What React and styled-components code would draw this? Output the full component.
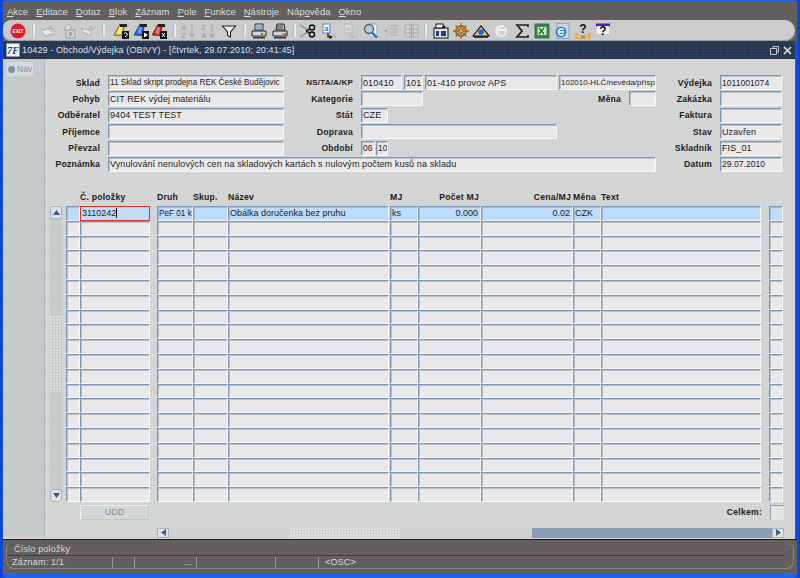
import React from "react";
import styled, { createGlobalStyle } from "styled-components";

const GlobalStyle = createGlobalStyle`
  html, body { margin: 0; padding: 0; background: #1457d8; }
  * { box-sizing: border-box; }
`;

const dots = (color, size = 3) => `
  background-image: radial-gradient(circle at 1px 1px, ${color} 0.5px, transparent 1px);
  background-size: ${size}px ${size}px;
`;

const Frame = styled.div`
  width: 800px;
  height: 578px;
  overflow: hidden;
  display: flex;
  flex-direction: column;
  padding: 2px 3px 4px 3px;
  background: linear-gradient(90deg, #0a3fd0, #1c66ee 1%, #1c66ee 99%, #0a3fd0);
  font-family: "Liberation Sans", Arial, sans-serif;
  font-size: 9px;
  color: #222;
`;

const Menu = styled.div`
  height: 18px;
  flex: none;
  display: flex;
  align-items: center;
  gap: 8px;
  padding-left: 4px;
  font-size: 9.5px;
  color: #dcdcdc;
  background-color: #5f5f5f;
  ${dots("#77605f", 4)}
`;

const MenuKey = styled.u`
  text-decoration: underline;
`;

const Toolbar = styled.div`
  height: 21px;
  flex: none;
  display: flex;
  align-items: center;
  padding-left: 5px;
  margin-right: 2px;
  background: #c9cccb;
  border-radius: 8px 10px 10px 8px;
  box-shadow: inset 0 -1px 0 #9a9fa3;
  position: relative;
`;

const ToolbarBack = styled.div`
  background: #5f5f5f;
  flex: none;
`;

const Slot = styled.div`
  width: ${(p) => p.$w}px;
  flex: none;
  height: 16px;
  display: flex;
  justify-content: center;
`;

const Sep = styled.div`
  width: ${(p) => p.$w}px;
  flex: none;
  height: 13px;
  display: flex;
  justify-content: center;
  &::after {
    content: "";
    width: 2px;
    height: 100%;
    background: #e4e8ec;
    border-left: 1px solid #aebdcc;
  }
`;

const Icon = styled.svg.attrs({ viewBox: "0 0 16 16", width: 16, height: 16 })`
  flex: none;
  overflow: visible;
`;

const TitleBar = styled.div`
  height: 18px;
  flex: none;
  margin-right: 2px;
  display: flex;
  align-items: center;
  padding: 0 3px 0 3px;
  gap: 2px;
  background-color: #283549;
  ${dots("#2f4470", 3)}
  color: #dde1e8;
  font-size: 9px;
  letter-spacing: 0.12px;
`;

const TitleText = styled.span`
  flex: 1;
  white-space: nowrap;
`;

const WinButtons = styled.div`
  display: flex;
  gap: 4px;
  align-items: center;
`;

const Body = styled.div`
  flex: 1;
  min-height: 0;
  margin-right: 2px;
  display: flex;
  background-color: #d6d7d7;
  ${dots("#cdd0d0", 3)}
`;

const NavPanel = styled.div`
  width: 41px;
  flex: none;
  padding: 3px 0 0 3px;
  margin: 0 0 2px 1px;
  background-color: #c9cccc;
  ${dots("#bfc5c6", 3)}
  border-right: 1px solid #a9b6c2;
`;

const NavTab = styled.div`
  width: 26px;
  height: 14px;
  display: flex;
  align-items: center;
  gap: 2px;
  padding-left: 1px;
  background: #d6d9da;
  color: #7f93ad;
  font-size: 8.5px;
`;

const NavDot = styled.span`
  width: 7px;
  height: 7px;
  border-radius: 50%;
  background: #8593a5;
`;

const Main = styled.div`
  flex: 1;
  min-width: 0;
  display: flex;
  flex-direction: column;
  padding-top: 16px;
`;

const Form = styled.div`
  display: flex;
  flex-direction: column;
  gap: 1.4px;
  padding-left: 7px;
`;

const FormRow = styled.div`
  height: 15px;
  display: flex;
  align-items: stretch;
`;

const Label = styled.div`
  width: ${(p) => p.$w}px;
  flex: none;
  margin-right: 8px;
  display: flex;
  align-items: center;
  justify-content: flex-end;
  white-space: nowrap;
  font-size: ${(p) => p.$fs || 8.7}px;
  font-weight: 700;
  letter-spacing: 0.2px;
  color: #1c1c1c;
`;

const Field = styled.div`
  width: ${(p) => p.$w}px;
  margin-right: ${(p) => p.$mr || 0}px;
  flex: none;
  display: flex;
  align-items: center;
  overflow: hidden;
  white-space: nowrap;
  padding: 0 0 0 1px;
  font-size: ${(p) => p.$fs || 9}px;
  letter-spacing: ${(p) => (p.$fs ? 0 : 0.1)}px;
  background: #e9e9e9;
  border-top: 1px solid #7d96b5;
  border-left: 1px solid #7d96b5;
  border-right: 1px solid #f7f7f7;
  border-bottom: 1px solid #f7f7f7;
  box-shadow: inset 1px 1px 0 #b4c2d2;
`;

const TableArea = styled.div`
  margin-top: 18px;
  display: flex;
  padding-left: 5px;
`;

const VScroll = styled.div`
  width: 12px;
  height: 296px;
  margin-top: 16px;
  margin-right: 4px;
  flex: none;
  display: flex;
  flex-direction: column;
  background: #c6cacb;
  border-radius: 3px;
`;

const VButton = styled.div`
  height: 13px;
  flex: none;
  display: flex;
  align-items: center;
  justify-content: center;
  background: #dfe2e4;
  border: 1px solid #a8b4c0;
  border-radius: 3px;
`;

const VTrack = styled.div`
  flex: 1;
  display: flex;
  align-items: center;
`;

const VGrip = styled.div`
  width: 100%;
  height: 76px;
  ${dots("#e9ecec", 3)}
`;

const Table = styled.div`
  display: flex;
  flex-direction: column;
`;

const HeadRow = styled.div`
  height: 16px;
  padding-bottom: 4px;
  display: flex;
  align-items: flex-end;
`;

const HeadCell = styled.div`
  width: ${(p) => p.$w}px;
  margin-left: ${(p) => p.$ml}px;
  padding-right: ${(p) => (p.$align === "right" ? 2 : 0)}px;
  flex: none;
  white-space: nowrap;
  text-align: ${(p) => p.$align};
  font-size: 8.7px;
  font-weight: 700;
  letter-spacing: 0.2px;
  color: #1c1c1c;
`;

const Rows = styled.div`
  display: grid;
  grid-auto-rows: 14.8px;
`;

const Row = styled.div`
  display: flex;
`;

const Cell = styled.div`
  width: ${(p) => p.$w}px;
  margin-left: ${(p) => p.$ml}px;
  flex: none;
  display: flex;
  align-items: center;
  justify-content: ${(p) => (p.$align === "right" ? "flex-end" : "flex-start")};
  overflow: hidden;
  white-space: nowrap;
  padding: 0 ${(p) => (p.$align === "right" ? 2 : 0)}px 0 1px;
  font-size: ${(p) => p.$fs || 9}px;
  background: ${(p) => (p.$active ? "#bfdcfb" : "#e9e9e9")};
  border-top: 1px solid #7d96b5;
  border-left: 1px solid #7d96b5;
  border-right: 1px solid #f7f7f7;
  border-bottom: 1px solid #f7f7f7;
  box-shadow: inset 1px 1px 0 ${(p) => (p.$active ? "#a3bfdc" : "#b4c2d2")};
  ${(p) => p.$focus && "border: 1px solid #d8322e; box-shadow: none;"}
`;

const Caret = styled.span`
  width: 1px;
  height: 10px;
  background: #111;
`;

const Footer = styled.div`
  margin-top: 3px;
  padding-left: 35px;
  display: flex;
  align-items: center;
`;

const UddButton = styled.div`
  width: 69px;
  height: 15px;
  display: flex;
  align-items: center;
  justify-content: center;
  color: #7e8c9c;
  font-size: 9px;
  background: #d4d7d8;
  border: 1px solid #bcc6d0;
  border-top-color: #eef0f0;
  border-left-color: #eef0f0;
`;

const TotalLabel = styled.div`
  margin-left: auto;
  margin-right: 8px;
  font-size: 8.7px;
  font-weight: 700;
  letter-spacing: 0.2px;
`;

const TotalField = styled.div`
  width: 14px;
  height: 15px;
  margin-right: 11px;
  background: #e2e3e3;
  border-top: 1px solid #8ea2bb;
  border-left: 1px solid #8ea2bb;
`;

const HScroll = styled.div`
  height: 10px;
  margin: 8px 11px 0 112px;
  display: flex;
  background: #cfd2d3;
`;

const HButton = styled.div`
  width: 12px;
  flex: none;
  display: flex;
  align-items: center;
  justify-content: center;
  background: #dfe2e4;
  border: 1px solid #a8b4c0;
`;

const HTrack = styled.div`
  flex: 1;
  display: flex;
  padding-left: 121px;
`;

const HGrip = styled.div`
  width: 110px;
  ${dots("#eceeee", 3)}
`;

const HThumb = styled.div`
  width: 240px;
  flex: none;
  background: #8c9db6;
`;

const StatusWrap = styled.div`
  height: 35px;
  flex: none;
  margin-top: auto;
  padding: 2px 3px 5px 3px;
  background-color: #5f5f5f;
  ${dots("#77605f", 4)}
  border-top: 1px solid #1d1d1d;
`;

const StatusBox = styled.div`
  height: 100%;
  display: flex;
  flex-direction: column;
  border: 1px solid #868686;
  border-top: none;
  border-radius: 8px;
  color: #d9d9d9;
  font-size: 9px;
  letter-spacing: 0.2px;
`;

const Hint = styled.div`
  height: 14px;
  padding-left: 7px;
  display: flex;
  align-items: center;
  margin-right: 9px;
  border-bottom: 1px solid #3a4048;
`;

const InfoRow = styled.div`
  flex: 1;
  display: flex;
  align-items: center;
`;

const InfoCell = styled.div`
  width: ${(p) => p.$w}px;
  height: 11px;
  flex: none;
  display: flex;
  align-items: center;
  justify-content: ${(p) => (p.$right ? "flex-end" : "flex-start")};
  padding: 0 ${(p) => (p.$right ? 4 : 0)}px 0 ${(p) => p.$pl || 0}px;
  border-right: 1px solid ${(p) => (p.$plain ? "transparent" : "#8a9bb0")};
`;

const ExitIcon = () => (
  <Icon>
    <circle cx="8" cy="8" r="7.5" fill="#e01c2c" />
    <text x="8" y="10" fontSize="5" fontWeight="700" fill="#fff" textAnchor="middle" fontFamily="Liberation Sans">EXIT</text>
  </Icon>
);

const GreyArrow = ({ flip }) => (
  <Icon>
    <path d={flip ? "M1 5l10 3v5L3 9z" : "M1 8l9-3 4 2v3l-8 3z"} fill="#e3e5e6" stroke="#aab0b4" />
    <path d="M11 3v6M8 6h6" stroke="#b2b8bc" strokeWidth="1.4" />
  </Icon>
);

const GreyFile = () => (
  <Icon>
    <path d="M3 7l4-6 3 2-2 5z" fill="#dfe2e3" stroke="#a5abb0" />
    <rect x="5" y="7" width="9" height="8" fill="#cdd1d3" stroke="#9aa0a5" />
    <path d="M8 9h3v4H8z" fill="#a5abb0" />
  </Icon>
);

const QueryIcon = ({ color, light, mark }) => (
  <Icon>
    <path d="M1 12L7 1l4 3-1 9z" fill={color} stroke="#2b2b2b" strokeWidth="0.6" />
    <path d="M4 10l3-7 2 1-1 7z" fill={light} />
    <rect x="7" y="1" width="7" height="3" fill="#222" />
    <rect x="9" y="8" width="7" height="8" fill="#111" />
    {mark === "help" && <path d="M11 10.5q1.500-1.500 3 0t-1.500 2.500v1" stroke="#fff" fill="none" />}
    {mark === "play" && <path d="M11 9.500l4 2.500-4 2.500z" fill="#fff" />}
    {mark === "x" && <path d="M11 10l3 4M14 10l-3 4" stroke="#fff" />}
  </Icon>
);

const SortIcon = ({ top, bottom }) => (
  <Icon>
    <text x="0" y="7" fontSize="8" fill="#a3a9ae" fontFamily="Liberation Sans" fontWeight="700">{top}</text>
    <text x="0" y="15" fontSize="8" fill="#a3a9ae" fontFamily="Liberation Sans" fontWeight="700">{bottom}</text>
    <path d="M11 1v12M8.500 10.500L11 14l2.500-3.500" stroke="#a3a9ae" fill="none" strokeWidth="1.200" />
  </Icon>
);

const FilterIcon = () => (
  <Icon>
    <path d="M1.500 3h13L9.500 9v5l-3-1.500V9z" fill="#eef0f0" stroke="#222" strokeWidth="1.100" />
  </Icon>
);

const PrintIcon = ({ alt }) => (
  <Icon>
    <path d={alt ? "M5 1h7l1 6H4z" : "M4 1h8v6H4z"} fill={alt ? "#c9c9c9" : "#f3f3f3"} stroke="#222" />
    <path d="M5 3h6M5 5h6" stroke={alt ? "#444" : "#3a6fc0"} />
    <path d="M1 8h14v5H1z" fill="#d5d5d5" stroke="#222" />
    <path d="M2 14h12v1.500H2z" fill="#333" />
    <rect x="10" y="10" width="2" height="2" fill={alt ? "#e0a020" : "#35a040"} />
    <rect x="12.500" y="10" width="2" height="2" fill={alt ? "#d03030" : "#e0c020"} />
  </Icon>
);

const CutIcon = () => (
  <Icon>
    <path d="M0 2l9 6-9 6" fill="none" stroke="#5f9a9c" strokeWidth="1.300" />
    <circle cx="12" cy="4.500" r="2.500" fill="none" stroke="#111" strokeWidth="1.500" />
    <circle cx="12" cy="11.500" r="2.500" fill="none" stroke="#111" strokeWidth="1.500" />
    <path d="M6 8l4-2.500M6 8l4 2.500" stroke="#111" strokeWidth="1.300" />
  </Icon>
);

const CopyIcon = ({ off }) => (
  <Icon>
    <rect x="2" y="1" width="7" height="9" fill={off ? "#dadcdd" : "#eef1f6"} stroke={off ? "#b4b9bc" : "#6c86b8"} />
    <text x="3.500" y="8" fontSize="7" fill={off ? "#aeb3b6" : "#2048c0"} fontFamily="Liberation Sans">a</text>
    <path d="M7 10v4h3M8.500 12.500L10.500 14 8.500 15.500" stroke={off ? "#aeb3b6" : "#111"} fill="none" strokeWidth="1.200" />
    <text x="11" y="15" fontSize="7" fill={off ? "#bbc0c3" : "#a8aeb2"} fontFamily="Liberation Sans">a</text>
  </Icon>
);

const SearchIcon = () => (
  <Icon>
    <path d="M6 1h8v13H8" fill="#e8ebeb" stroke="#a7adb2" />
    <circle cx="6" cy="6" r="4.500" fill="#b9cbd8" stroke="#54606b" strokeWidth="1.300" />
    <path d="M9 9.500l5 5" stroke="#2c6cc8" strokeWidth="2.200" />
  </Icon>
);

const ListIcon = () => (
  <Icon>
    <path d="M6 3h8M6 6h8M6 9h8M6 12h8" stroke="#a5abaf" strokeWidth="1.200" />
    <path d="M4 2v12" stroke="#bcc1c4" />
    <path d="M0 8l3-2v4z" fill="#a5abaf" />
  </Icon>
);

const ColumnsIcon = () => (
  <Icon>
    <path d="M1 2h5v12H1zM9 2h5v12H9z" fill="#d0d3d4" stroke="#a5abaf" />
    <path d="M1 6h5M1 10h5M9 6h5M9 10h5" stroke="#a5abaf" />
    <path d="M7.500 0v16" stroke="#a5abaf" />
  </Icon>
);

const FormIcon = () => (
  <Icon>
    <rect x="1" y="5" width="14" height="10" fill="#dfe6f2" stroke="#111" />
    <path d="M3 8h3v5H3zM8 8h5v5H8z" fill="#1f3f7a" />
    <rect x="3" y="1" width="7" height="4" fill="#fff" stroke="#111" />
    <path d="M9 5l2-3 2 3" fill="#111" />
  </Icon>
);

const WheelIcon = () => (
  <Icon>
    <circle cx="8" cy="8" r="5" fill="none" stroke="#a0651c" strokeWidth="2" />
    <path d="M8 0v16M0 8h16M2.500 2.500l11 11M13.500 2.500l-11 11" stroke="#a0651c" strokeWidth="1.300" />
    <circle cx="8" cy="8" r="1.500" fill="#e0b060" />
  </Icon>
);

const TriangleIcon = () => (
  <Icon>
    <path d="M0 13L8 3l8 10z" fill="#e8d070" stroke="#111" strokeWidth="1.200" />
    <circle cx="8" cy="9" r="2.800" fill="#1c62e0" />
    <path d="M1 14h14" stroke="#111" strokeWidth="1.500" />
  </Icon>
);

const DiscIcon = () => (
  <Icon>
    <circle cx="8" cy="8" r="6.500" fill="#eceeee" stroke="#c4c8ca" />
    <path d="M5 9h7M6 11h5M8 6l4-2" stroke="#b0b5b8" />
  </Icon>
);

const SigmaIcon = () => (
  <Icon>
    <path d="M14 4V2H3l5 6-5 6h11v-2" fill="none" stroke="#1c1c1c" strokeWidth="1.700" />
  </Icon>
);

const ExcelIcon = () => (
  <Icon>
    <rect x="1" y="1" width="14" height="14" fill="#2f8a4a" stroke="#3d6f4a" />
    <rect x="3.500" y="4" width="9" height="8" fill="#cfe8d0" />
    <path d="M5 5l5 6M10 5l-5 6" stroke="#1a6a34" strokeWidth="1.300" />
  </Icon>
);

const BrowserIcon = () => (
  <Icon>
    <rect x="3" y="0.500" width="12" height="15" fill="#cbd7e8" stroke="#8ea4c4" />
    <circle cx="7" cy="9" r="5.500" fill="#3a86dc" />
    <path d="M4 9h6M9.500 7a3 3 0 1 0 0 4" stroke="#fff" strokeWidth="1.300" fill="none" />
  </Icon>
);

const HelpPeopleIcon = () => (
  <Icon>
    <text x="8" y="10" fontSize="12" fontWeight="700" textAnchor="middle" fill="#111" fontFamily="Liberation Sans">?</text>
    <path d="M0 10h4v6H0zM12 10h4v6h-4z" fill="#eab060" />
    <path d="M5.500 12h5v4h-5z" fill="#d89040" />
  </Icon>
);

const HelpWindowIcon = () => (
  <Icon>
    <rect x="1" y="0.500" width="14" height="3" fill="#5020c0" />
    <rect x="2" y="3" width="12" height="8" fill="#f2f2f2" />
    <text x="8" y="12" fontSize="12" fontWeight="700" textAnchor="middle" fill="#111" fontFamily="Liberation Sans">?</text>
  </Icon>
);

const FormsLogo = () => (
  <svg width="14" height="14" viewBox="0 0 14 14">
    <rect width="14" height="14" fill="#f4f6fb" stroke="#1c3ca8" />
    <text x="7" y="11" fontSize="10" fontWeight="700" fontStyle="italic" textAnchor="middle" fill="#1c2fa0" fontFamily="Liberation Serif">7F</text>
  </svg>
);

const RestoreIcon = () => (
  <svg width="9" height="9" viewBox="0 0 9 9">
    <path d="M3 2.500V.5h5.500V6H6.500M.5 2.500H6.500V8.500H.5z" fill="none" stroke="#c6ccd6" />
  </svg>
);

const CloseIcon = () => (
  <svg width="9" height="9" viewBox="0 0 9 9">
    <path d="M1 1l7 7M8 1L1 8" stroke="#e4e7ec" strokeWidth="1.500" />
  </svg>
);

const UpArrow = () => (
  <svg width="7" height="5" viewBox="0 0 7 5"><path d="M3.500 0L7 5H0z" fill="#3f5f88" /></svg>
);
const DownArrow = () => (
  <svg width="7" height="5" viewBox="0 0 7 5"><path d="M0 0h7L3.500 5z" fill="#3f5f88" /></svg>
);
const LeftArrow = () => (
  <svg width="5" height="7" viewBox="0 0 5 7"><path d="M5 0v7L0 3.500z" fill="#3f5f88" /></svg>
);
const RightArrow = () => (
  <svg width="5" height="7" viewBox="0 0 5 7"><path d="M0 0v7l5-3.500z" fill="#3f5f88" /></svg>
);

const menuItems = [
  ["", "A", "kce"],
  ["", "E", "ditace"],
  ["", "D", "otaz"],
  ["", "B", "lok"],
  ["", "Z", "áznam"],
  ["", "P", "ole"],
  ["", "F", "unkce"],
  ["", "N", "ástroje"],
  ["Náp", "o", "věda"],
  ["", "O", "kno"],
];

const tools = [
  [20, <ExitIcon />],
  [10],
  [20, <GreyArrow />],
  [21, <GreyFile />],
  [18, <GreyArrow flip />],
  [12],
  [23, <QueryIcon color="#f0c020" light="#ffe880" mark="help" />],
  [17, <QueryIcon color="#2060e0" light="#60a0ff" mark="play" />],
  [19, <QueryIcon color="#d82020" light="#ff7070" mark="x" />],
  [12],
  [18, <SortIcon top="A" bottom="Z" />],
  [22, <SortIcon top="Z" bottom="A" />],
  [18, <FilterIcon />],
  [12],
  [18, <PrintIcon />],
  [24, <PrintIcon alt />],
  [4],
  [24, <CutIcon />],
  [18, <CopyIcon />],
  [26, <CopyIcon off />],
  [14, <SearchIcon />],
  [28, <ListIcon />],
  [12, <ColumnsIcon />],
  [14],
  [18, <FormIcon />],
  [22, <WheelIcon />],
  [18, <TriangleIcon />],
  [22, <DiscIcon />],
  [20, <SigmaIcon />],
  [20, <ExcelIcon />],
  [20, <BrowserIcon />],
  [22, <HelpPeopleIcon />],
  [18, <HelpWindowIcon />],
];

const columns = [
  { w: 14, ml: 0 },
  { w: 70, ml: 0, head: "Č. položky", value: "3110242", focus: true },
  { w: 36, ml: 7, head: "Druh", value: "PeF 01 k", fs: 8.2 },
  { w: 35, ml: 0, head: "Skup." },
  { w: 161, ml: 0, head: "Název", value: "Obálka doručenka bez pruhu" },
  { w: 28, ml: 1, head: "MJ", value: "ks" },
  { w: 63, ml: 0, head: "Počet MJ", value: "0.000", align: "right" },
  { w: 92, ml: 0, head: "Cena/MJ", value: "0.02", align: "right" },
  { w: 28, ml: 0, head: "Měna", value: "CZK" },
  { w: 160, ml: 0, head: "Text" },
  { w: 14, ml: 8 },
];

const rows = Array.from({ length: 20 }, (_, i) => i);

export default function App() {
  return (
    <>
      <GlobalStyle />
      <Frame>
        <Menu>
          {menuItems.map(([before, key, after]) => (
            <span key={before + key + after}>
              {before}<MenuKey>{key}</MenuKey>{after}
            </span>
          ))}
        </Menu>
        <ToolbarBack>
          <Toolbar>
            {tools.map(([w, icon], i) =>
              icon ? <Slot key={i} $w={w}>{icon}</Slot> : <Sep key={i} $w={w} />
            )}
          </Toolbar>
        </ToolbarBack>
        <TitleBar>
          <FormsLogo />
          <TitleText>10429 - Obchod/Výdejka (OBIVY) - [čtvrtek, 29.07.2010; 20:41:45]</TitleText>
          <WinButtons>
            <RestoreIcon />
            <CloseIcon />
          </WinButtons>
        </TitleBar>
        <Body>
          <NavPanel>
            <NavTab><NavDot />Nav</NavTab>
          </NavPanel>
          <Main>
            <Form>
              <FormRow>
                <Label $w={48}>Sklad</Label>
                <Field $w={176} $fs={8.2}>11 Sklad skript prodejna REK České Budějovic</Field>
                <Label $w={69} $fs={8}>NS/TA/A/KP</Label>
                <Field $w={41} $mr={2}>010410</Field>
                <Field $w={19} $mr={2}>101</Field>
                <Field $w={132} $mr={2}>01-410 provoz APS</Field>
                <Field $w={97} $fs={8}>102010-HLČ/nevěda/přísp</Field>
                <Label $w={56}>Výdejka</Label>
                <Field $w={62} $fs={8.6}>1011001074</Field>
              </FormRow>
              <FormRow>
                <Label $w={48}>Pohyb</Label>
                <Field $w={176}>CIT REK výdej materiálu</Field>
                <Label $w={69}>Kategorie</Label>
                <Field $w={62} />
                <Label $w={198}>Měna</Label>
                <Field $w={27} />
                <Label $w={56}>Zakázka</Label>
                <Field $w={62} />
              </FormRow>
              <FormRow>
                <Label $w={48}>Odběratel</Label>
                <Field $w={176}>9404 TEST TEST</Field>
                <Label $w={69}>Stát</Label>
                <Field $w={27}>CZE</Field>
                <Label $w={324}>Faktura</Label>
                <Field $w={62} />
              </FormRow>
              <FormRow>
                <Label $w={48}>Příjemce</Label>
                <Field $w={176} />
                <Label $w={69}>Doprava</Label>
                <Field $w={196} />
                <Label $w={155}>Stav</Label>
                <Field $w={62}>Uzavřen</Field>
              </FormRow>
              <FormRow>
                <Label $w={48}>Převzal</Label>
                <Field $w={176} />
                <Label $w={69}>Období</Label>
                <Field $w={14} $mr={1} $fs={8.5}>06</Field>
                <Field $w={12} $fs={8.5}>10</Field>
                <Label $w={324}>Skladník</Label>
                <Field $w={62}>FIS_01</Field>
              </FormRow>
              <FormRow>
                <Label $w={48}>Poznámka</Label>
                <Field $w={548}>Vynulování nenulových cen na skladových kartách s nulovým počtem kusů na skladu</Field>
                <Label $w={56}>Datum</Label>
                <Field $w={62} $fs={8.6}>29.07.2010</Field>
              </FormRow>
            </Form>
            <TableArea>
              <VScroll>
                <VButton><UpArrow /></VButton>
                <VTrack><VGrip /></VTrack>
                <VButton><DownArrow /></VButton>
              </VScroll>
              <Table>
                <HeadRow>
                  {columns.map((col, i) => (
                    <HeadCell key={i} $w={col.w} $ml={col.ml} $align={col.align || "left"}>
                      {col.head}
                    </HeadCell>
                  ))}
                </HeadRow>
                <Rows>
                  {rows.map((r) => (
                    <Row key={r}>
                      {columns.map((col, i) => (
                        <Cell
                          key={i}
                          $w={col.w}
                          $ml={col.ml}
                          $fs={col.fs}
                          $align={col.align}
                          $active={r === 0}
                          $focus={r === 0 && col.focus}
                        >
                          {r === 0 && col.value}
                          {r === 0 && col.focus && <Caret />}
                        </Cell>
                      ))}
                    </Row>
                  ))}
                </Rows>
              </Table>
            </TableArea>
            <Footer>
              <UddButton>UDD</UddButton>
              <TotalLabel>Celkem:</TotalLabel>
              <TotalField />
            </Footer>
            <HScroll>
              <HButton><LeftArrow /></HButton>
              <HTrack><HGrip /></HTrack>
              <HThumb />
              <HButton><RightArrow /></HButton>
            </HScroll>
          </Main>
        </Body>
        <StatusWrap>
          <StatusBox>
            <Hint>Číslo položky</Hint>
            <InfoRow>
              <InfoCell $w={106} $pl={5}>Záznam: 1/1</InfoCell>
              <InfoCell $w={22} />
              <InfoCell $w={62} $right>...</InfoCell>
              <InfoCell $w={79} />
              <InfoCell $w={43} />
              <InfoCell $w={100} $pl={6} $plain>&lt;OSC&gt;</InfoCell>
            </InfoRow>
          </StatusBox>
        </StatusWrap>
      </Frame>
    </>
  );
}
